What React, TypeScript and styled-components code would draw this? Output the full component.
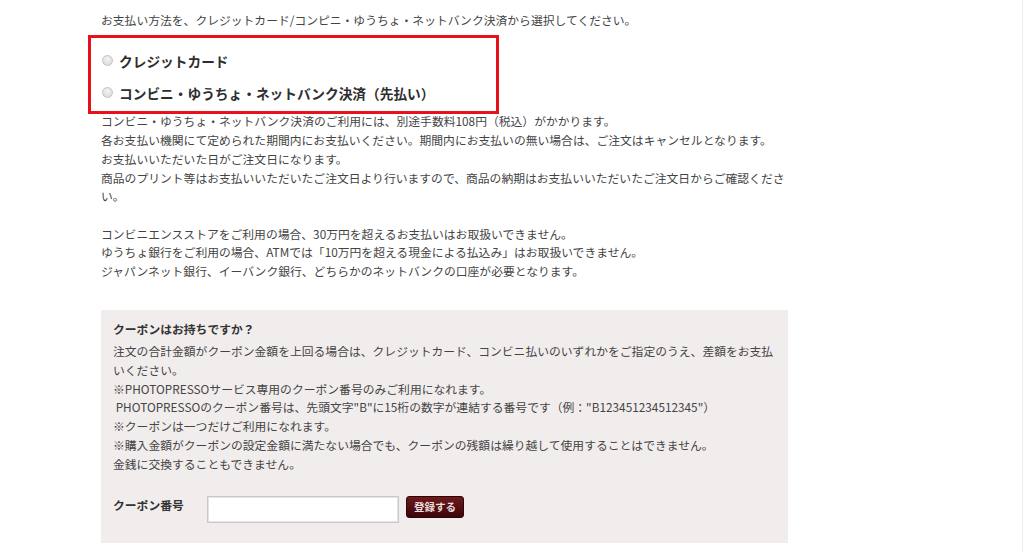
import styled, {createGlobalStyle} from "styled-components";

const GlobalStyle = createGlobalStyle`
    html, body {
        margin: 0;
        padding: 0;
        background: #fff;
    }

    body {
        font-family: "Noto Sans CJK JP", "Noto Sans", sans-serif;
        color: #444;
    }
`;

const Page = styled.div`
    box-sizing: border-box;
    width: 1023px;
    min-height: 552px;
    border-right: 1px solid #ececec;
    padding: 10.6px 0 0 101px;
`;

const Column = styled.div`
    width: 690px;
    font-size: 11.8px;
    line-height: 18.7px;
`;

const Text = styled.p<{ $gap?: number; }>`
    margin: ${props => props.$gap ?? 0}px 0 0;
`;

const MethodBox = styled.div`
    box-sizing: border-box;
    width: 411px;
    margin: 5.6px 0 -1.5px -13px;
    padding: 7px 11px 2px;
    border: 3px solid #e8101c;
`;

const MethodRow = styled.label`
    display: flex;
    align-items: center;
    gap: 6px;
    height: 32px;
    font-size: 13.7px;
    font-weight: 700;
    color: #2e2e2e;
    cursor: pointer;
`;

const Radio = styled.span`
    box-sizing: border-box;
    width: 11px;
    height: 11px;
    border-radius: 50%;
    border: 1px solid #c4c4c4;
    background: radial-gradient(circle at 50% 35%, #f4f4f4 0%, #e2e2e2 60%, #d2d2d2 100%);
    flex: 0 0 auto;
`;

const CouponBox = styled.section`
    box-sizing: border-box;
    width: 687px;
    margin-top: 29px;
    padding: 10.6px 12px 20px;
    background: #f2eded;
`;

const CouponTitle = styled.h3`
    margin: 0 0 3.3px;
    font-size: 11.8px;
    line-height: 18.7px;
    font-weight: 700;
    color: #333;
`;

const FormRow = styled.div`
    display: flex;
    align-items: flex-start;
    margin-top: 22.5px;
`;

const FieldLabel = styled.span`
    width: 94px;
    font-weight: 700;
    color: #333;
`;

const CodeInput = styled.input`
    box-sizing: border-box;
    width: 192px;
    height: 27px;
    margin: 0 7px 0 0;
    border: 1px solid #c9c9c9;
    box-shadow: inset 0 0 0 1px #e4e4e4;
    background: #fff;
    outline: none;
`;

const SubmitButton = styled.button`
    box-sizing: border-box;
    width: 58px;
    height: 22px;
    padding: 0;
    border: 1px solid #2e0406;
    border-radius: 3px;
    background: linear-gradient(#6d1a1e, #3d0609);
    color: #eadede;
    font-family: inherit;
    font-size: 10.5px;
    font-weight: 700;
    cursor: pointer;
`;

const couponNotes = [
  "注文の合計金額がクーポン金額を上回る場合は、クレジットカード、コンビニ払いのいずれかをご指定のうえ、差額をお支払いください。",
  "※PHOTOPRESSOサービス専用のクーポン番号のみご利用になれます。",
  "\u00a0PHOTOPRESSOのクーポン番号は、先頭文字\"B\"に15桁の数字が連結する番号です（例：\"B123451234512345\"）",
  "※クーポンは一つだけご利用になれます。",
  "※購入金額がクーポンの設定金額に満たない場合でも、クーポンの残額は繰り越して使用することはできません。",
  "金銭に交換することもできません。",
];

export default function App() {
  return <>
    <GlobalStyle/>
    <Page>
      <Column>
        <Text>お支払い方法を、クレジットカード/コンピニ・ゆうちょ・ネットバンク決済から選択してください。</Text>

        <MethodBox>
          <MethodRow><Radio/>クレジットカード</MethodRow>
          <MethodRow><Radio/>コンビニ・ゆうちょ・ネットバンク決済（先払い）</MethodRow>
        </MethodBox>

        <Text>
          コンビニ・ゆうちょ・ネットバンク決済のご利用には、別途手数料108円（税込）がかかります。<br/>
          各お支払い機関にて定められた期間内にお支払いください。期間内にお支払いの無い場合は、ご注文はキャンセルとなります。<br/>
          お支払いいただいた日がご注文日になります。<br/>
          商品のプリント等はお支払いいただいたご注文日より行いますので、商品の納期はお支払いいただいたご注文日からご確認ください。
        </Text>
        <Text $gap={18.7}>
          コンビニエンスストアをご利用の場合、30万円を超えるお支払いはお取扱いできません。<br/>
          ゆうちょ銀行をご利用の場合、ATMでは「10万円を超える現金による払込み」はお取扱いできません。<br/>
          ジャパンネット銀行、イーバンク銀行、どちらかのネットバンクの口座が必要となります。
        </Text>

        <CouponBox>
          <CouponTitle>クーポンはお持ちですか？</CouponTitle>
          {couponNotes.map((note, i) => <Text key={i}>{note}</Text>)}
          <FormRow>
            <FieldLabel>クーポン番号</FieldLabel>
            <CodeInput type="text"/>
            <SubmitButton type="button">登録する</SubmitButton>
          </FormRow>
        </CouponBox>
      </Column>
    </Page>
  </>;
}
